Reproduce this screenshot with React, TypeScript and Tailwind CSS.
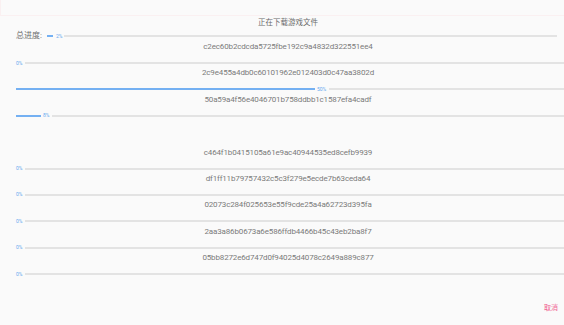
import React from 'react';

const files = [
  { hash: 'c2ec60b2cdcda5725fbe192c9a4832d322551ee4', pct: '0%', bar: 0 },
  { hash: '2c9e455a4db0c60101962e012403d0c47aa3802d', pct: '50%', bar: 299 },
  { hash: '50a59a4f56e4046701b758ddbb1c1587efa4cadf', pct: '8%', bar: 25 },
  { hash: '', pct: '', bar: 0 },
  { hash: 'c464f1b0415105a61e9ac40944535ed8cefb9939', pct: '0%', bar: 0 },
  { hash: 'df1ff11b79757432c5c3f279e5ecde7b63ceda64', pct: '0%', bar: 0 },
  { hash: '02073c284f025653e55f9cde25a4a62723d395fa', pct: '0%', bar: 0 },
  { hash: '2aa3a86b0673a6e586ffdb4466b45c43eb2ba8f7', pct: '0%', bar: 0 },
  { hash: '05bb8272e6d747d0f94025d4078c2649a889c877', pct: '0%', bar: 0 },
];

const font = { fontFamily: 'Roboto, "Noto Sans CJK SC", sans-serif' };

const ProgressRow: React.FC<{ pct: string; bar: number }> = ({ pct, bar }) => (
  <div className="flex items-center h-[6px]">
    {bar > 0 && <div className="h-[2px] bg-[#74b0f2]" style={{ width: bar }} />}
    <span className={`text-[5px] leading-none text-[#6aa9ef] ${bar > 0 ? 'ml-[2px]' : ''} mr-[3px]`}>{pct}</span>
    <div className="flex-1 h-[2px] bg-[#e3e3e3]" />
  </div>
);

const App: React.FC = () => {
  return (
    <div className="w-[564px] h-[325px] bg-[#fafafa] relative overflow-hidden" style={font}>
      <div className="h-[16px] border-b border-l border-[#faf0f1]" />
      <div className="pl-[16px]">
        <div className="h-[10px] mt-[2px] flex items-center justify-center text-[7.5px] text-[#6b6b6b] pr-[4px]">
          正在下载游戏文件
        </div>
        <div className="flex items-center h-[10px] mt-[3px] pr-[7px]">
          <span className="text-[8px] leading-none text-[#6f6f6f] mr-[5px]">总进度:</span>
          <div className="w-[6px] h-[2px] bg-[#74b0f2]" />
          <span className="text-[5px] leading-none text-[#6aa9ef] ml-[3px] mr-[2px]">2%</span>
          <div className="flex-1 h-[2px] bg-[#e3e3e3]" />
        </div>
        <div className="flex flex-col mt-[1px]">
          {files.map((f, i) => (
            <div key={i} className="h-[26.4px] flex flex-col">
              <div className="h-[10px] flex items-center justify-center text-[8px] text-[#7a7a7a] leading-none pr-[4px] tracking-[-0.15px]">
                {f.hash}
              </div>
              <div className="mt-[8px]">
                {f.pct && <ProgressRow pct={f.pct} bar={f.bar} />}
              </div>
            </div>
          ))}
        </div>
      </div>
      <div className="absolute right-[6px] bottom-[13px] text-[7px] leading-none text-[#f06292]">取消</div>
    </div>
  );
};

export default App;
